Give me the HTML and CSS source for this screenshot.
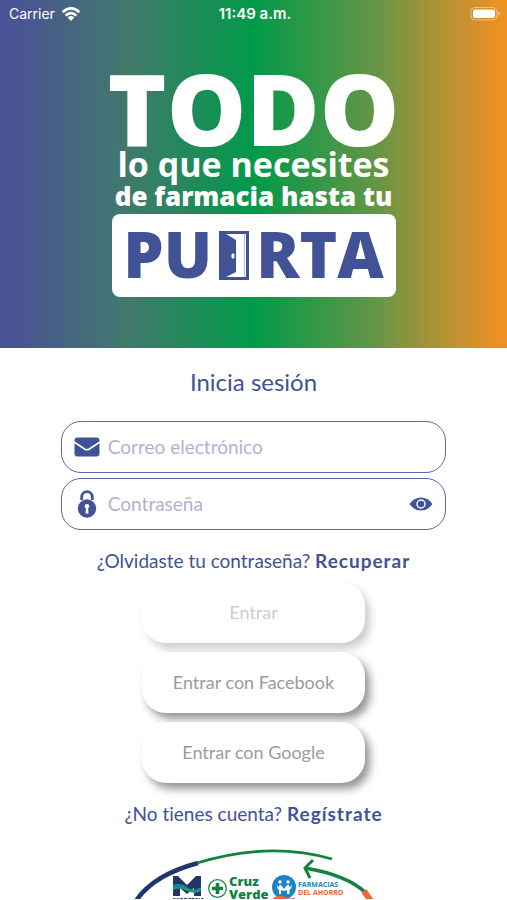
FILE: index.html
```html
<!DOCTYPE html>
<html lang="es">
<head>
<meta charset="utf-8">
<meta name="viewport" content="width=device-width, initial-scale=1">
<title>Inicia sesión</title>
<link rel="stylesheet" href="styles.css">
</head>
<body>
<header class="hero">
  <div class="status">
    <span class="carrier">Carrier
      <svg width="20" height="16" viewBox="0 0 20 16" aria-hidden="true">
        <g fill="none" stroke="#fff" stroke-width="2.6"><path d="M1.6 6.2Q10 -1.4 18.4 6.2"/><path d="M4.6 9.6Q10 4.6 15.4 9.6"/></g>
        <path d="M6.7 11.4Q10 8.8 13.3 11.4L10 15Z" fill="#fff"/>
      </svg>
    </span>
    <span class="clock">11:49 a.m.</span>
    <svg class="battery" width="31" height="16" viewBox="0 0 31 16" aria-hidden="true">
      <rect x="1" y="1.5" width="26" height="12.5" rx="4" fill="none" stroke="#fff" stroke-opacity=".45"/>
      <rect x="3" y="3.5" width="22" height="8.5" rx="2" fill="#fff"/>
      <path d="M28.5 5.5Q31 7.7 28.5 10Z" fill="#fff" fill-opacity=".55"/>
    </svg>
  </div>
  <h1 class="slogan">
    <span class="todo">TODO</span>
    <span class="need">lo que necesites</span>
    <span class="pharmacy">de farmacia hasta tu</span>
    <span class="plate">
      <span>PU</span>
      <svg width="30" height="49" viewBox="0 0 30 49" role="img" aria-label="E">
        <path d="M0 0H30V49H0Z" fill="#425296"/>
        <path d="M7 3H27V46H7L17 41V9Z" fill="#fff"/>
        <path d="M25.5 3V46" stroke="#b8bedb" stroke-width="1"/>
        <ellipse cx="14" cy="25" rx="1.6" ry="2.8" fill="#fff"/>
      </svg>
      <span>RTA</span>
    </span>
  </h1>
</header>
<main class="login">
  <h2>Inicia sesión</h2>
  <form>
    <div class="field">
      <label for="email" aria-label="Correo electrónico">
        <svg width="26" height="20" viewBox="0 0 26 20" aria-hidden="true">
          <rect x="0.5" y="0.5" width="25" height="19" rx="3" fill="#425296"/>
          <path d="M0 5L11 12.2Q13 13.4 15 12.2L26 5" fill="none" stroke="#fff" stroke-width="1.6"/>
        </svg>
      </label>
      <input id="email" type="email" placeholder="Correo electrónico">
    </div>
    <div class="field">
      <label for="password" aria-label="Contraseña">
        <svg width="26" height="28" viewBox="0 0 26 28" aria-hidden="true">
          <path d="M7.7 10V7.2A5.3 5.6 0 0 1 18.3 7.2V10" fill="none" stroke="#425296" stroke-width="2.8"/>
          <circle cx="13" cy="18.5" r="9.2" fill="#425296"/>
          <circle cx="13" cy="16.2" r="2.3" fill="#fff"/>
          <path d="M12 17H14L14.5 23.5H11.5Z" fill="#fff"/>
        </svg>
      </label>
      <input id="password" type="password" placeholder="Contraseña">
      <button class="reveal" type="button" aria-label="Mostrar contraseña">
        <svg width="24" height="14" viewBox="0 0 24 14" aria-hidden="true">
          <path d="M0.5 7Q5 0.5 12 0.5T23.5 7Q19 13.5 12 13.5T0.5 7Z" fill="#425296"/>
          <circle cx="12" cy="7" r="4" fill="none" stroke="#fff" stroke-width="1.4"/>
        </svg>
      </button>
    </div>
    <p class="hint">¿Olvidaste tu contraseña? <a href="#recuperar">Recuperar</a></p>
    <div class="actions">
      <button class="enter" type="submit" disabled>Entrar</button>
      <button class="enter" type="button">Entrar con Facebook</button>
      <button class="enter" type="button">Entrar con Google</button>
    </div>
    <p class="hint">¿No tienes cuenta? <a href="#registro">Regístrate</a></p>
  </form>
</main>
<footer class="partners">
  <svg width="270" height="60" viewBox="0 0 270 60" role="img" aria-label="Farmacias asociadas">
    <path d="M17 62Q34 36 79 24" fill="none" stroke="#20356b" stroke-width="4.5"/>
    <path d="M78 24Q150 2 213 20" fill="none" stroke="#108343" stroke-width="2.8"/>
    <path d="M186 29Q228 36 247 54" fill="none" stroke="#108343" stroke-width="3.6"/>
    <path d="M194 21L186 29L191 39" fill="none" stroke="#108343" stroke-width="3"/>
    <path d="M245 52L252 62" fill="none" stroke="#f0653a" stroke-width="6"/>
    <path d="M54 37H59L68 46L77 37H82V57H75V49L68 55L61 49V57H54Z" fill="#20356b"/>
    <path d="M54 46Q62 43 68 48T82 48V52Q74 54 67 51T54 50Z" fill="#1685a8"/>
    <path d="M54 50Q61 47 68 51T82 51" fill="none" stroke="#27a150" stroke-width="1.6"/>
    <text class="moderna" x="54" y="64">MODERNA</text>
    <circle cx="98.5" cy="49.5" r="8.8" fill="#fff" stroke="#108343" stroke-width="1.2"/>
    <path d="M98.5 44V55M93 49.5H104" stroke="#108343" stroke-width="3.6"/>
    <text class="cruz" x="110" y="47">Cruz</text>
    <text class="cruz" x="110" y="60">Verde</text>
    <circle cx="165" cy="48" r="12" fill="#1d83c2"/>
    <g fill="#fff"><circle cx="161" cy="43" r="1.7"/><circle cx="169" cy="43" r="1.7"/><path d="M158 45L159 49L160.500 46H162L165 50L168 46H170L171 49L172.500 45V49L170.500 51V55H168V51L165 52L162 51V55H160V51L158 49Z"/></g>
    <path d="M154 59Q161 55 166 58T176 58L174 62H155Z" fill="#f0653a"/>
    <text class="ahorro" x="179" y="48">FARMACIAS</text>
    <text class="ahorro orange" x="179" y="56">DEL AHORRO</text>
  </svg>
</footer>
</body>
</html>
```
FILE: styles.css
```css
* { box-sizing: border-box; }
body {
  margin: 0;
  background: #fff;
  color: #425296;
  font-family: Lato, "Liberation Sans", sans-serif;
  font-variant-ligatures: none;
  overflow-x: hidden;
}
.hero {
  height: 348px;
  background: linear-gradient(90deg, #4a5394 0%, #4a5394 3%, #41796c 25%, #019a49 50%, #649546 74%, #a69338 85%, #ef9022 99%);
  color: #fff;
}
.status {
  display: grid;
  grid-template-columns: 1fr auto 1fr;
  align-items: center;
  height: 28px;
  padding: 0 6px 0 9px;
  font: 14px/28px Inter, sans-serif;
}
.carrier { display: flex; align-items: center; gap: 6px; }
.clock { font-size: 15px; font-weight: 600; }
.battery { justify-self: end; }
.slogan {
  display: flex;
  flex-direction: column;
  align-items: center;
  margin: 0;
  padding-top: 32px;
  font-family: "Open Sans", sans-serif;
  font-weight: 800;
  white-space: nowrap;
}
.todo { font-size: 100px; line-height: 94px; }
.need { font-size: 34px; line-height: 32px; font-weight: 700; margin-top: -6px; }
.pharmacy { font-size: 26px; line-height: 32px; }
.plate {
  display: flex;
  align-items: center;
  justify-content: center;
  gap: 7px;
  width: 284px;
  height: 83px;
  margin-top: 2px;
  border-radius: 8px;
  background: #fff;
  color: #425296;
  font-size: 64px;
  line-height: 64px;
}
.plate span { padding-bottom: 3px; }
.login {
  width: 76%;
  max-width: 480px;
  margin: 0 auto;
}
h2 {
  margin: 0;
  padding: 18px 0 23px;
  font-size: 24px;
  line-height: 32px;
  font-weight: 400;
  text-align: center;
}
.field {
  display: flex;
  align-items: center;
  gap: 8px;
  height: 52px;
  margin-bottom: 5px;
  padding: 0 12px;
  border: 1px solid #5a67a5;
  border-radius: 20px;
}
.field label { display: flex; }
.field input {
  flex: 1;
  min-width: 0;
  padding: 0;
  border: 0;
  outline: 0;
  background: none;
  color: #425296;
  font: 19px/28px Lato, sans-serif;
}
.field input::placeholder { color: #b0b3d0; opacity: 1; }
.reveal {
  display: flex;
  padding: 0;
  border: 0;
  background: none;
}
.hint {
  margin: 0;
  padding-top: 11px;
  font-size: 19px;
  line-height: 30px;
  text-align: center;
  white-space: nowrap;
}
.hint a {
  color: inherit;
  font-weight: 700;
  letter-spacing: 1px;
  text-decoration: none;
}
.actions {
  display: flex;
  flex-direction: column;
  align-items: center;
  gap: 9px;
  padding: 6px 0 5px;
}
.enter {
  width: 58%;
  height: 61px;
  padding: 0 0 2px;
  border: 0;
  border-radius: 24px;
  background: #fff;
  box-shadow: 5px 6px 9px rgba(0, 0, 0, .42);
  color: #9b9b9b;
  font: 18px/28px Lato, sans-serif;
}
.enter:disabled {
  box-shadow: 5px 6px 9px rgba(0, 0, 0, .2);
  color: #cdcdcd;
}
.partners {
  display: flex;
  justify-content: center;
  height: 60px;
  margin-top: 10px;
}
.partners text { font-family: "Open Sans", sans-serif; font-weight: 800; }
.partners .moderna { fill: #20356b; font-size: 6px; }
.partners .cruz { fill: #108343; font-size: 13px; }
.partners .ahorro { fill: #1d83c2; font: bold 7px "Liberation Sans Narrow", "Open Sans", sans-serif; }
.partners .orange { fill: #f0653a; }
```
